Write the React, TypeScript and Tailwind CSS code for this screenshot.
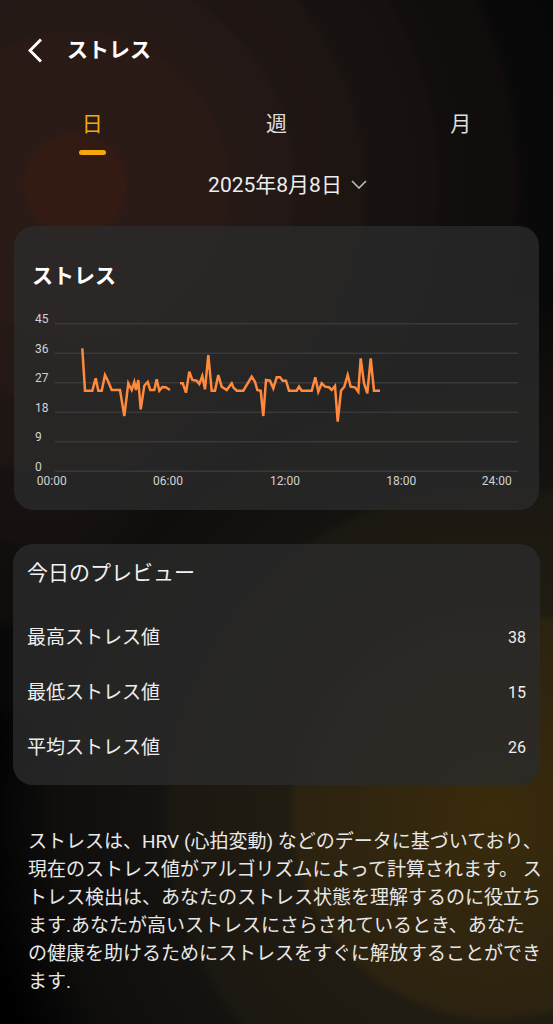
import React from 'react';

const seg1: [number, number][] = [
    [82.3, 348.3], [85, 390.7], [92.3, 390.7], [95.7, 378.3], [98.3, 390.7], [101.7, 390.7], [105, 375],
    [108.3, 381.7], [111.7, 390], [120, 390], [124.3, 416], [128.3, 383.3], [131.7, 390], [134.3, 382],
    [136, 390], [138.3, 380], [140.7, 409.3], [144.3, 385.7], [147.7, 382], [150.3, 390], [154.3, 390],
    [156.7, 379.3], [159.3, 390.7], [162.3, 387], [165.7, 387.3], [170, 390],
];

const seg2: [number, number][] = [
    [180, 383.3], [182.7, 383.3], [186, 392.7], [189.3, 371.7], [192.3, 380], [196.7, 380.7], [199.3, 384],
    [202.3, 376], [205, 389.3], [208.3, 355], [211.7, 390.7], [215, 390.7], [218.3, 375], [221.7, 386.7],
    [226.7, 390], [231.7, 383.3], [233.3, 387.3], [236.7, 390.7], [243.3, 390.7], [251.7, 376.7], [255, 381.7],
    [257.3, 390], [260.7, 390.7], [263.3, 416], [266, 380], [270, 380.7], [273.3, 388.3], [276.7, 377.3],
    [280, 377.3], [282.7, 380.7], [286, 380.7], [289, 390.7], [296.7, 390.7], [299, 386.7], [301.7, 390.7],
    [311.7, 390.7], [315.3, 377.3], [318.3, 391.7], [321.7, 383.3], [325, 386.7], [329, 387.3], [331.7, 390],
    [335, 386], [337.7, 421.7], [341, 390.7], [344.3, 386.7], [347.7, 375], [350.7, 386.7], [355, 387.3],
    [358.3, 391.7], [360.7, 358.3], [364, 383.3], [367.3, 393.3], [370.7, 358.3], [374, 390.7], [380, 390.7],
];

const toPoints = (pts: [number, number][]) => pts.map(([x, y]) => `${x},${y}`).join(' ');

const gridLines = [
    { label: '45', y: 323.7 },
    { label: '36', y: 353.2 },
    { label: '27', y: 382.7 },
    { label: '18', y: 412.2 },
    { label: '9', y: 441.7 },
    { label: '0', y: 471.2 },
];

const xLabels = [
    { label: '00:00', x: 51.7 },
    { label: '06:00', x: 168 },
    { label: '12:00', x: 285 },
    { label: '18:00', x: 401.3 },
    { label: '24:00', x: 496.7 },
];

const StressChart: React.FC = () => (
    <svg width="525" height="220" viewBox="0 0 525 220" className="block">
        {/* page coordinates, shifted into the card */}
        <g transform="translate(-14,-290)">
            {gridLines.map(g => (
                <g key={g.label}>
                    <line x1="55" x2="518" y1={g.y} y2={g.y} stroke="#393939" strokeWidth="1.5" />
                    <text x="35" y={g.y - 3.5} fill="#d2d2d2" fontSize="12" dominantBaseline="middle">
                        {g.label}
                    </text>
                </g>
            ))}
            {xLabels.map(l => (
                <text key={l.label} x={l.x} y="482" fill="#d2d2d2" fontSize="12" textAnchor="middle" dominantBaseline="middle">
                    {l.label}
                </text>
            ))}
            <polyline points={toPoints(seg1)} fill="none" stroke="#ff8a3d" strokeWidth="2.5" />
            <polyline points={toPoints(seg2)} fill="none" stroke="#ff8a3d" strokeWidth="2.5" />
        </g>
    </svg>
);

const stats = [
    { label: '最高ストレス値', value: 38 },
    { label: '最低ストレス値', value: 15 },
    { label: '平均ストレス値', value: 26 },
];

export default function App() {
    return (
        <div className="min-h-[1024px] w-full overflow-hidden text-white font-[Roboto,'Noto_Sans_CJK_JP',sans-serif] bg-[#060606] bg-[radial-gradient(circle_at_495px_815px,#3a2b0b_0px,#33270e_90px,#2b2210_200px,#211c12_207px,#1b1811_325px,#141310_333px,#0f0e0d_440px,transparent_520px),radial-gradient(circle_at_75px_185px,#331b13_0px,#331b13_50px,#2b1a15_52px,#2a1a15_150px,#251916_156px,#231815_215px,#1f1613_222px,#1d1512_285px,#181211_292px,#161110_360px,#120e0d_368px,#0f0c0b_440px,#0a0909_448px,#070707_520px,#000_545px)]">
            {/* Header */}
            <div className="flex items-center pt-[38px] pl-[28px]">
                <svg width="14" height="25" viewBox="0 0 14 25" className="block">
                    <polyline points="13,1.5 2,12.5 13,23.5" fill="none" stroke="#fff" strokeWidth="3" />
                </svg>
                <h1 className="ml-[25px] text-[21px] leading-[25px] font-bold">ストレス</h1>
            </div>

            {/* Tabs */}
            <div className="grid grid-cols-3 mt-[47px]">
                <div className="flex flex-col items-center">
                    <span className="text-[21px] leading-[28px] text-[#f5a80c]">日</span>
                    <span className="mt-[12px] w-[27px] h-[4.5px] rounded-full bg-[#f5a80c]" />
                </div>
                <div className="text-center text-[21px] leading-[28px] text-[#dedede]">週</div>
                <div className="text-center text-[21px] leading-[28px] text-[#dedede]">月</div>
            </div>

            {/* Date */}
            <div className="flex items-center justify-center pl-[22px] mt-[16px]">
                <span className="text-[21px] leading-[28px] text-[#ededed]">2025年8月8日</span>
                <svg width="16" height="9" viewBox="0 0 16 9" className="ml-[9px] block">
                    <polyline points="1,1 8,8 15,1" fill="none" stroke="#bdbdbd" strokeWidth="1.6" />
                </svg>
            </div>

            {/* Chart card */}
            <div className="mx-[14px] mt-[27px] h-[284px] rounded-[20px] bg-[rgba(42,42,42,0.8)]">
                <h2 className="pt-[36px] pl-[18px] text-[21px] leading-[28px] font-bold">ストレス</h2>
                <StressChart />
            </div>

            {/* Preview card */}
            <div className="mx-[13px] mt-[34px] h-[241px] rounded-[20px] bg-[rgba(42,42,42,0.8)] pl-[14px] pr-[14px]">
                <h3 className="pt-[15px] text-[21px] leading-[28px] text-[#f2f2f2]">今日のプレビュー</h3>
                <div className="mt-[24px]">
                    {stats.map(s => (
                        <div key={s.label} className="flex h-[55px] items-center justify-between">
                            <span className="text-[19px] text-[#eeeeee]">{s.label}</span>
                            <span className="text-[16px] text-[#eeeeee]">{s.value}</span>
                        </div>
                    ))}
                </div>
            </div>

            {/* Description */}
            <p className="mt-[43px] pl-[28px] pr-[4px] text-[19px] leading-[28px] text-[#e8e8e8]">
                ストレスは、HRV (心拍変動) などのデータに基づいており、<br />
                現在のストレス値がアルゴリズムによって計算されます。 ス<br />
                トレス検出は、あなたのストレス状態を理解するのに役立ち<br />
                ます.あなたが高いストレスにさらされているとき、あなた<br />
                の健康を助けるためにストレスをすぐに解放することができ<br />
                ます.
            </p>
        </div>
    );
}
